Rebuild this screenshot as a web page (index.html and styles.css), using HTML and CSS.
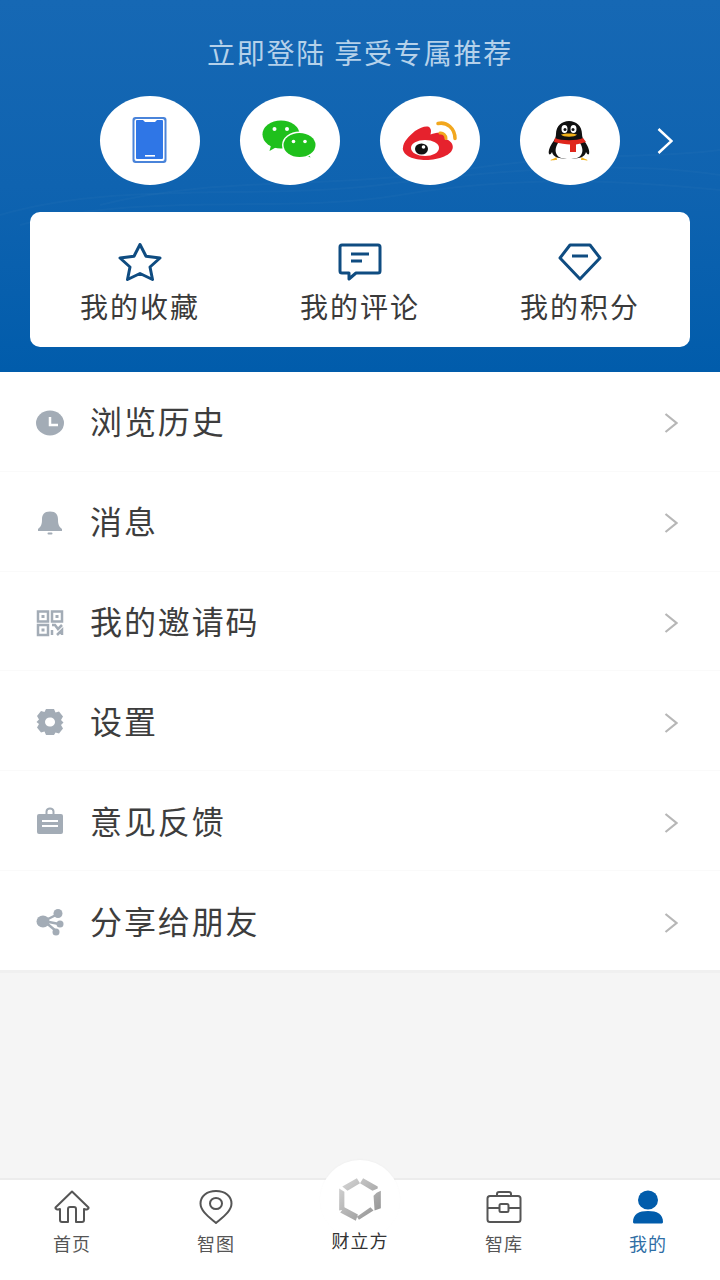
FILE: index.html
```html
<!DOCTYPE html>
<html lang="zh-CN">
<head>
    <meta charset="utf-8">
    <meta name="viewport" content="width=device-width, initial-scale=1.0">
    <title>我的</title>
    <link rel="stylesheet" href="styles.css">
</head>
<body>
    <div class="page">
        <div class="header">
            <svg class="waves" viewBox="0 0 720 372" fill="none" stroke="#fff" stroke-opacity="0.025" stroke-width="2">
                <path d="M0 215C120 180 260 200 380 185S620 160 720 175"/>
                <path d="M20 225C150 190 280 215 400 195S620 180 720 190"/>
                <path d="M100 205C220 175 320 190 460 170S640 160 720 150"/>
            </svg>
            <div class="title">立即登陆 享受专属推荐</div>
            <div class="login-row">
                <div class="login-btn">
                    <svg viewBox="0 0 100 89">
                        <rect x="32.5" y="21" width="34" height="46" rx="3" fill="#4a84da"/>
                        <rect x="34.5" y="23" width="30" height="42" rx="2" fill="#fff"/>
                        <path d="M38 24h5l2 2h10l2-2h5a1 1 0 0 1 1 1v37a1 1 0 0 1-1 1H37a1 1 0 0 1-1-1V25a1 1 0 0 1 1-1z" fill="#2f76e6"/>
                        <rect x="45" y="59" width="10" height="1.6" fill="#fff"/>
                    </svg>
                </div>
                <div class="login-btn">
                    <svg viewBox="0 0 100 89">
                        <path d="M31 49.5l-1.500 5.500 7-4z" fill="#1fc01c"/>
                        <ellipse cx="41" cy="38.500" rx="18.500" ry="14" fill="#1fc01c"/>
                        <path d="M68 57l2.500 4.500-7.500-3z" fill="#1fc01c"/>
                        <ellipse cx="59.500" cy="49" rx="17.500" ry="13.500" fill="#fff"/>
                        <ellipse cx="59.500" cy="49" rx="16" ry="12" fill="#1fc01c"/>
                        <circle cx="34.500" cy="33" r="2" fill="#fff"/>
                        <circle cx="47" cy="33" r="2" fill="#fff"/>
                        <circle cx="53.500" cy="45.500" r="1.800" fill="#fff"/>
                        <circle cx="65" cy="45.500" r="1.800" fill="#fff"/>
                    </svg>
                </div>
                <div class="login-btn">
                    <svg viewBox="0 0 100 89">
                        <path d="M23 52c0-6 6-12 12-17 6-4 13-6 15-3 1.500 2 1 4 .5 6.500 6-2.500 12-2.500 14 0 1 1.500.8 3 .3 4.500 5 1 8 4 8 8 0 8-14 13-27 13-12 0-23-4-23-12z" fill="#e6222d"/>
                        <ellipse cx="45" cy="52" rx="14" ry="8" fill="#fff"/>
                        <ellipse cx="41.500" cy="53" rx="6.500" ry="5.500" fill="#111"/>
                        <circle cx="43.500" cy="51" r="1.800" fill="#fff"/>
                        <path d="M58 27.500c9-2 17 5 17 15" fill="none" stroke="#f2a71e" stroke-width="3.500" stroke-linecap="round"/>
                        <path d="M60 37c3-.5 6 2 6 5.500" fill="none" stroke="#f2a71e" stroke-width="3" stroke-linecap="round"/>
                    </svg>
                </div>
                <div class="login-btn">
                    <svg viewBox="0 0 100 89">
                        <path d="M37 64c-3 0-7 1-6.500 0 1-1 3-1 6-3zM61 64c3 0 7 1 6.500 0-1-1-3-1-6-3z" fill="#f2b21a"/>
                        <path d="M36 38c0-8 6-13 13-13s13 5 13 13c0 3 1 5 3 8 3 4 5 9 4 12-1 1-2 0-3-2-1 5-7 7-17 7s-16-2-17-7c-1 2-2 3-3 2-1-3 1-8 4-12 2-3 3-5 3-8z" fill="#111"/>
                        <path d="M38 47h22c3 5 3 9 1 12-2 3-6 4-12 4s-10-1-12-4c-2-3-2-7 1-12z" fill="#fff"/>
                        <ellipse cx="44.500" cy="33" rx="3" ry="4" fill="#fff"/>
                        <ellipse cx="53.500" cy="33" rx="3" ry="4" fill="#fff"/>
                        <circle cx="45" cy="33.500" r="1.500" fill="#111"/>
                        <circle cx="53" cy="33.500" r="1.500" fill="#111"/>
                        <path d="M41 38.500c3-1.500 13-1.500 16 0-2 3-14 3-16 0z" fill="#f2b21a"/>
                        <path d="M35 42c6 3 22 3 28 0l3 4c-4 1-7 2-10 2.500V56h-6v-7.500c-4 0-10-1-16-2.500z" fill="#e0261c"/>
                    </svg>
                </div>
                <svg class="login-more" viewBox="0 0 16 28" fill="none" stroke="#fff" stroke-width="2.500">
                    <path d="M1.500 2l13 12-13 12"/>
                </svg>
            </div>
            <div class="card">
                <div class="card-item">
                    <svg viewBox="0 0 44 38" fill="none" stroke="#0f4c81" stroke-width="3" stroke-linejoin="round">
                        <path d="M22 1.500l6 11.800 14 1.700-10 9 2.500 12.500L22 30.500 9.500 36.500 12 24 2 15l14-1.700z"/>
                    </svg>
                    <span>我的收藏</span>
                </div>
                <div class="card-item">
                    <svg viewBox="0 0 44 38" fill="none" stroke="#0f4c81" stroke-width="3" stroke-linejoin="round">
                        <path d="M4 2h36a2 2 0 0 1 2 2v24a2 2 0 0 1-2 2H18l-7 6v-6H4a2 2 0 0 1-2-2V4a2 2 0 0 1 2-2z"/>
                        <path d="M13 11h18M13 18h11"/>
                    </svg>
                    <span>我的评论</span>
                </div>
                <div class="card-item">
                    <svg viewBox="0 0 44 38" fill="none" stroke="#0f4c81" stroke-width="3" stroke-linejoin="round">
                        <path d="M12 2h20l10 13-20 21L2 15z"/>
                        <path d="M14 13h16"/>
                    </svg>
                    <span>我的积分</span>
                </div>
            </div>
        </div>

        <div class="menu">
            <div class="menu-row">
                <svg class="menu-icon" viewBox="0 0 32 32">
                    <ellipse cx="16" cy="16" rx="14" ry="12.500" fill="#a3acb6"/>
                    <path d="M16 10v8h8" fill="none" stroke="#fff" stroke-width="2.500"/>
                </svg>
                <span class="menu-text">浏览历史</span>
                <svg class="menu-arrow" viewBox="0 0 14 20" fill="none" stroke="#b7b7b7" stroke-width="2.200"><path d="M1.500 1l11 9-11 9"/></svg>
            </div>
            <div class="menu-row">
                <svg class="menu-icon" viewBox="0 0 32 32">
                    <path d="M16 4.500c6 0 8 3.500 8 8 0 5 1 7 4 9.500v2H4v-2c3-2.500 4-4.500 4-9.500 0-4.500 2-8 8-8z" fill="#a3acb6"/>
                    <rect x="13.500" y="25.500" width="5" height="2" rx="1" fill="#a3acb6"/>
                </svg>
                <span class="menu-text">消息</span>
                <svg class="menu-arrow" viewBox="0 0 14 20" fill="none" stroke="#b7b7b7" stroke-width="2.200"><path d="M1.500 1l11 9-11 9"/></svg>
            </div>
            <div class="menu-row">
                <svg class="menu-icon" viewBox="0 0 32 32" fill="none" stroke="#a3acb6" stroke-width="2.500">
                    <rect x="4" y="4.500" width="10" height="10"/>
                    <rect x="18" y="4.500" width="10" height="10"/>
                    <rect x="4" y="18" width="10" height="10"/>
                    <path d="M7.500 8h3v3h-3zM21.500 8h3v3h-3zM7.500 21.500h3v3h-3z" fill="#a3acb6" stroke="none"/>
                    <path d="M18 18h3l3 4 4-4M18 28v-5M23 28l5-5v5"/>
                </svg>
                <span class="menu-text">我的邀请码</span>
                <svg class="menu-arrow" viewBox="0 0 14 20" fill="none" stroke="#b7b7b7" stroke-width="2.200"><path d="M1.500 1l11 9-11 9"/></svg>
            </div>
            <div class="menu-row">
                <svg class="menu-icon" viewBox="0 0 32 32">
                    <path fill-rule="evenodd" fill="#a3acb6" d="M12 3h8l1.500 3.500 3.500-1 4 5-2 3.500 2.500 2.500-2.500 2.500 2 3.500-4 5-3.500-1L20 29h-8l-1.500-3.500-3.500 1-4-5 2-3.500L2.500 16 5 13.500 3 10l4-5 3.500 1zM16 11.500c-3 0-5 2-5 4.500s2 4.500 5 4.500 5-2 5-4.500-2-4.500-5-4.500z"/>
                </svg>
                <span class="menu-text">设置</span>
                <svg class="menu-arrow" viewBox="0 0 14 20" fill="none" stroke="#b7b7b7" stroke-width="2.200"><path d="M1.500 1l11 9-11 9"/></svg>
            </div>
            <div class="menu-row">
                <svg class="menu-icon" viewBox="0 0 32 32">
                    <path d="M12.500 8V5.500a3.500 3 0 0 1 7 0V8" fill="none" stroke="#a3acb6" stroke-width="2"/>
                    <rect x="3" y="8" width="26" height="20" rx="2" fill="#a3acb6"/>
                    <path d="M8 15h16M8 20h16" stroke="#fff" stroke-width="2"/>
                </svg>
                <span class="menu-text">意见反馈</span>
                <svg class="menu-arrow" viewBox="0 0 14 20" fill="none" stroke="#b7b7b7" stroke-width="2.200"><path d="M1.500 1l11 9-11 9"/></svg>
            </div>
            <div class="menu-row">
                <svg class="menu-icon" viewBox="0 0 32 32" fill="#a3acb6">
                    <path d="M10 15L24 8M10 15l15 3M10 15l12 10" stroke="#a3acb6" stroke-width="2.500"/>
                    <ellipse cx="9" cy="15.500" rx="6.500" ry="6"/>
                    <circle cx="24" cy="7.500" r="4.500"/>
                    <circle cx="26" cy="18" r="3.500"/>
                    <circle cx="22" cy="26" r="3.500"/>
                </svg>
                <span class="menu-text">分享给朋友</span>
                <svg class="menu-arrow" viewBox="0 0 14 20" fill="none" stroke="#b7b7b7" stroke-width="2.200"><path d="M1.500 1l11 9-11 9"/></svg>
            </div>
        </div>

        <div class="blank"></div>

        <div class="tabbar">
            <div class="tab-bump"></div>
            <div class="tab">
                <svg viewBox="0 0 36 34" fill="none" stroke="#555" stroke-width="2" stroke-linejoin="round">
                    <path d="M18 1.500L1.500 17.500c-.5 1.500 2 2.500 4.500 1.500v11a2 2 0 0 0 2 2h6V19a2 2 0 0 1 2-2h4a2 2 0 0 1 2 2v13h6a2 2 0 0 0 2-2V19c2.500 1 5 0 4.500-1.500z"/>
                </svg>
                <span>首页</span>
            </div>
            <div class="tab">
                <svg viewBox="0 0 36 34" fill="none" stroke="#555" stroke-width="2">
                    <path d="M18 33C11 27 2.500 21 2.500 13.500 2.500 6 9 1 18 1s15.500 5 15.500 12.500C33.500 21 25 27 18 33z"/>
                    <ellipse cx="18" cy="13.500" rx="6" ry="5.500"/>
                </svg>
                <span>智图</span>
            </div>
            <div class="tab tab-center">
                <svg viewBox="0 0 48 48">
                    <defs>
                        <linearGradient id="cube" x1="0" y1="0" x2="1" y2="1">
                            <stop offset="0" stop-color="#d8d8d8"/>
                            <stop offset="1" stop-color="#8e8e8e"/>
                        </linearGradient>
                    </defs>
                    <path d="M21 3l-14 8 5 4 12-7zM27 3l14 8v2l-5 2-12-7 3-5zM44 15v17l-6 2-1-14 3-3zM37 34l-14 9-2-3 13-9zM20 44L5 36l4-5 13 7zM4 34V13l5 3v17z" fill="url(#cube)"/>
                </svg>
                <span>财立方</span>
            </div>
            <div class="tab">
                <svg viewBox="0 0 36 34" fill="none" stroke="#555" stroke-width="2">
                    <path d="M11 6V4a2 2 0 0 1 2-2h10a2 2 0 0 1 2 2v2"/>
                    <rect x="1.500" y="6" width="33" height="26" rx="2.500"/>
                    <path d="M1.500 18h12M22.500 18h12"/>
                    <rect x="13.500" y="14" width="9" height="8" rx="1.500"/>
                </svg>
                <span>智库</span>
            </div>
            <div class="tab tab-active">
                <svg viewBox="0 0 36 34" fill="#015cab">
                    <ellipse cx="18" cy="10" rx="10" ry="9.500"/>
                    <path d="M3 32c0-8 6-11 15-11s15 3 15 11c0 1-1 1.500-2 1.500H5c-1 0-2-.5-2-1.500z"/>
                </svg>
                <span>我的</span>
            </div>
        </div>
    </div>
</body>
</html>
```

FILE: styles.css
```css
body {
    font-family: "Noto Sans CJK SC", "Noto Sans", sans-serif;
    margin: 0;
    padding: 0;
    background-color: #f5f5f5;
}
.page {
    width: 720px;
    height: 1280px;
    display: flex;
    flex-direction: column;
    overflow: hidden;
}
.header {
    position: relative;
    height: 372px;
    box-sizing: border-box;
    padding-top: 32px;
    background: linear-gradient(180deg, #1668b4 0%, #0f63b0 50%, #015cab 100%);
}
.waves {
    position: absolute;
    left: 0;
    top: 0;
    width: 720px;
    height: 372px;
}
.title {
    position: relative;
    height: 40px;
    line-height: 40px;
    text-align: center;
    font-size: 28px;
    letter-spacing: 1.8px;
    color: #b5d1ea;
}
.login-row {
    position: relative;
    display: flex;
    align-items: center;
    gap: 40px;
    margin-top: 24px;
    padding-left: 100px;
}
.login-btn {
    width: 100px;
    height: 89px;
    border-radius: 50%;
    background-color: #fff;
}
.login-btn svg {
    display: block;
    width: 100px;
    height: 89px;
}
.login-more {
    width: 16px;
    height: 28px;
    margin-left: -3px;
}
.card {
    position: relative;
    display: flex;
    height: 135px;
    box-sizing: border-box;
    margin: 27px 30px 0;
    padding-top: 31px;
    background-color: #fff;
    border-radius: 10px;
}
.card-item {
    flex: 1;
    display: flex;
    flex-direction: column;
    align-items: center;
    gap: 5px;
    font-size: 28px;
    line-height: 40px;
    letter-spacing: 2px;
    color: #3a3a3a;
}
.card-item svg {
    width: 44px;
    height: 38px;
}
.menu {
    display: flex;
    flex-direction: column;
    height: 598px;
    background-color: #fff;
    border-bottom: 3px solid #f0f0f0;
    box-sizing: content-box;
}
.menu-row {
    flex: 1;
    display: flex;
    align-items: center;
    gap: 24px;
    padding: 0 42px 0 34px;
    border-bottom: 1px solid #fafafa;
}
.menu-row:last-child {
    border-bottom: none;
}
.menu-icon {
    width: 32px;
    height: 32px;
    margin-top: 3px;
}
.menu-text {
    flex: 1;
    font-size: 32px;
    letter-spacing: 1.9px;
    color: #3d3d3d;
    margin-bottom: 2px;
}
.menu-arrow {
    width: 14px;
    height: 20px;
    margin-top: 4px;
}
.blank {
    flex: 1;
}
.tabbar {
    position: relative;
    display: flex;
    height: 102px;
    box-sizing: border-box;
    background-color: #fff;
    border-top: 2px solid #ececec;
}
.tab-bump {
    position: absolute;
    left: 320px;
    top: -20px;
    width: 80px;
    height: 80px;
    border-radius: 50%;
    background-color: #fff;
    box-shadow: 0 -1px 2px rgba(0, 0, 0, 0.02);
}
.tab {
    position: relative;
    flex: 1;
    display: flex;
    flex-direction: column;
    align-items: center;
    padding-top: 10px;
    font-size: 18px;
    line-height: 24px;
    letter-spacing: 1px;
    color: #555;
}
.tab svg {
    width: 36px;
    height: 34px;
    margin-bottom: 7px;
}
.tab-center {
    padding-top: 0;
    color: #333;
}
.tab-center svg {
    width: 50px;
    height: 50px;
    margin-top: -5px;
    margin-bottom: 3px;
}
.tab-active {
    color: #2f6ea5;
}
```
